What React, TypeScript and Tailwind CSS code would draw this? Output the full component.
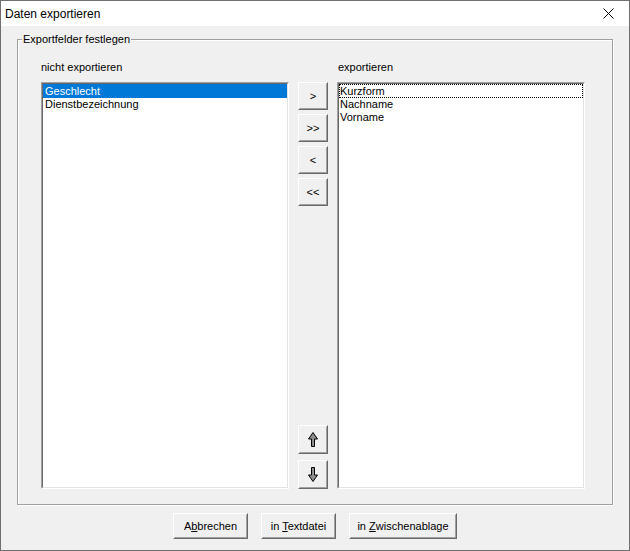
import type { ReactNode } from "react";

const font = { fontFamily: '"Liberation Sans", Arial, sans-serif' };

function Btn({ children, className = "" }: { children: ReactNode; className?: string }) {
  return (
    <div
      className={`border border-t-white border-l-white border-r-[#696969] border-b-[#696969] ${className}`}
    >
      <div className="flex h-full w-full items-center justify-center border border-t-[#f0f0f0] border-l-[#f0f0f0] border-r-[#a0a0a0] border-b-[#a0a0a0] bg-[#f0f0f0] text-[11px] text-black">
        {children}
      </div>
    </div>
  );
}

function ListBox({ children }: { children: ReactNode }) {
  return (
    <div className="h-[407px] border border-t-[#a0a0a0] border-l-[#a0a0a0] border-r-white border-b-white">
      <div className="h-full border border-t-[#696969] border-l-[#696969] border-r-[#e3e3e3] border-b-[#e3e3e3] bg-white text-[11px] leading-[13px] text-black">
        {children}
      </div>
    </div>
  );
}

function Arrow({ down }: { down?: boolean }) {
  return (
    <svg width="10" height="15" viewBox="0 0 10 15" className={down ? "rotate-180" : ""}>
      <path
        d="M5 0.5 L9.5 7 L6.5 7 L6.5 14.5 L3.5 14.5 L3.5 7 L0.5 7 Z"
        fill="#8c8c8c"
        stroke="#000"
        strokeWidth="1"
      />
    </svg>
  );
}

export default function App() {
  return (
    <div
      className="flex h-[551px] w-[630px] flex-col border border-[#6f6f6f] bg-[#f0f0f0]"
      style={font}
    >
      <div className="flex h-[25px] items-center justify-between bg-white pl-[4px] pr-[15px] text-[12px] text-black">
        <span>Daten exportieren</span>
        <svg width="11" height="11" viewBox="0 0 11 11">
          <path d="M0.5 0.5 L10.5 10.5 M10.5 0.5 L0.5 10.5" stroke="#000" strokeWidth="1" />
        </svg>
      </div>

      <div className="relative ml-[16px] mt-[13px] h-[466px] w-[596px] border border-[#a0a0a0] shadow-[inset_1px_1px_0_#fff,1px_1px_0_#fff]">
        <span className="absolute -top-[7px] left-[4px] bg-[#f0f0f0] px-[1px] text-[11px] leading-[13px] text-black">
          Exportfelder festlegen
        </span>
        <div className="grid grid-cols-[248px_30px_248px] gap-x-[9px] pl-[23px] pt-[21px]">
          <div className="text-[11px] leading-[13px] text-black">nicht exportieren</div>
          <div />
          <div className="pl-[1px] text-[11px] leading-[13px] text-black">exportieren</div>

          <div className="mt-[8px]">
            <ListBox>
              <div className="bg-[#0078d7] pl-[2px] leading-[14px] text-white">Geschlecht</div>
              <div className="pl-[2px]">Dienstbezeichnung</div>
            </ListBox>
          </div>

          <div className="mt-[8px] flex h-[407px] flex-col justify-between">
            <div className="flex flex-col gap-[4px]">
              <Btn className="h-[28px]">&gt;</Btn>
              <Btn className="h-[28px]">&gt;&gt;</Btn>
              <Btn className="h-[28px]">&lt;</Btn>
              <Btn className="h-[28px]">&lt;&lt;</Btn>
            </div>
            <div className="flex flex-col gap-[6px]">
              <Btn className="h-[29px]">
                <Arrow />
              </Btn>
              <Btn className="h-[29px]">
                <Arrow down />
              </Btn>
            </div>
          </div>

          <div className="mt-[8px]">
            <ListBox>
              <div className="border border-dotted border-black leading-[12px]">Kurzform</div>
              <div className="pl-[1px]">Nachname</div>
              <div className="pl-[1px]">Vorname</div>
            </ListBox>
          </div>
        </div>
      </div>

      <div className="mt-[8px] flex justify-center gap-[13px]">
        <Btn className="h-[26px] w-[75px]">
          <span>
            A<u>b</u>brechen
          </span>
        </Btn>
        <Btn className="h-[26px] w-[75px]">
          <span>
            in <u>T</u>extdatei
          </span>
        </Btn>
        <Btn className="h-[26px] w-[108px]">
          <span>
            in <u>Z</u>wischenablage
          </span>
        </Btn>
      </div>
    </div>
  );
}
